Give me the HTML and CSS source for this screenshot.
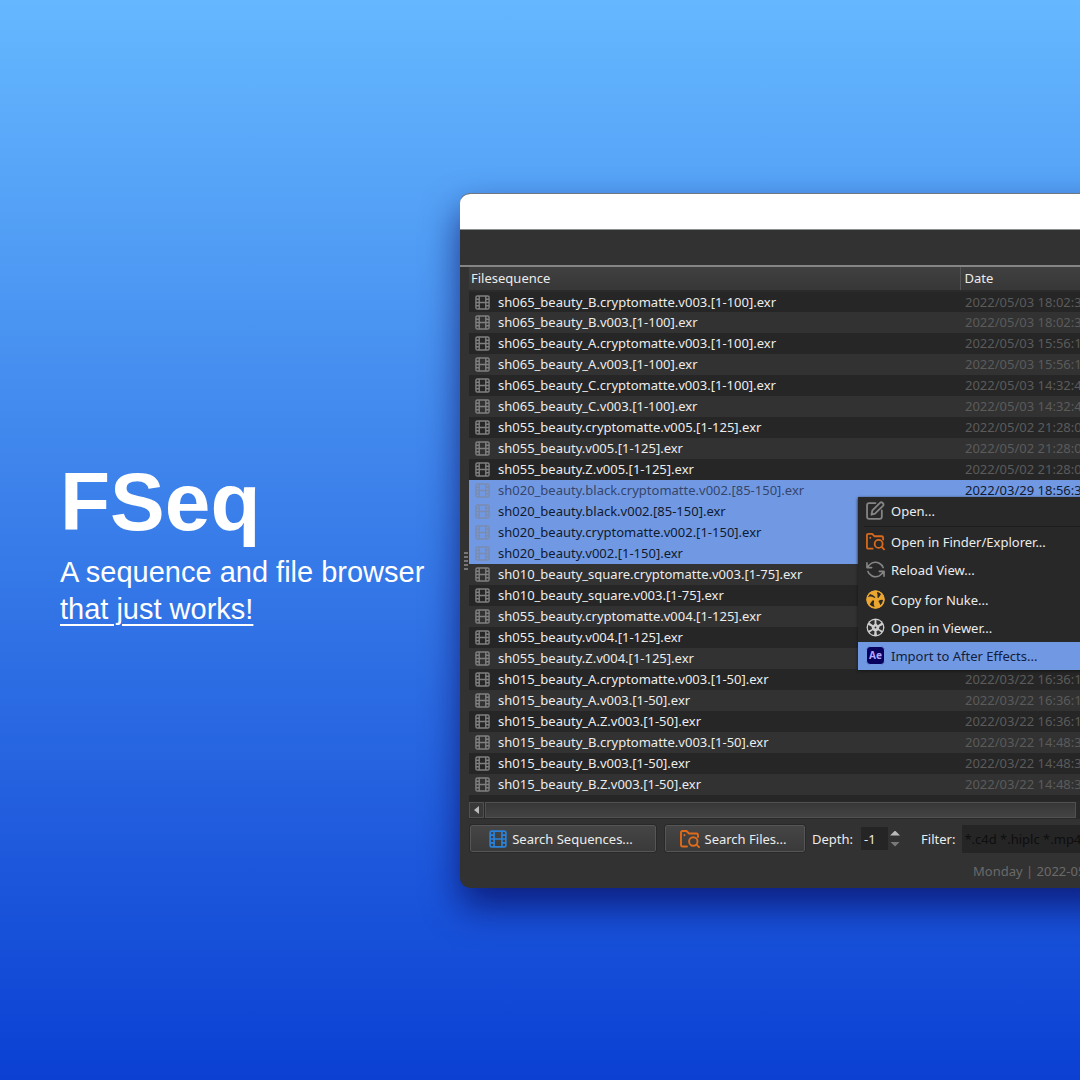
FILE: index.html
```html
<!DOCTYPE html>
<html lang="en">
<head>
<meta charset="utf-8">
<meta name="viewport" content="width=device-width, initial-scale=1">
<title>FSeq</title>
<link rel="stylesheet" href="styles.css">
</head>
<body>
<svg class="sprite" aria-hidden="true">
  <symbol id="film" viewBox="0 0 16 16"><g fill="none" stroke="currentColor" stroke-width="1.5"><rect x="1" y="1" width="14" height="14" rx="1.5"/><path d="M4.500 1v14M11.500 1v14M4.500 8h7M1 4.500h3.500M1 8h3.500M1 11.500h3.500M11.500 4.500H15M11.500 8H15M11.500 11.500H15"/></g></symbol>
  <symbol id="folder" viewBox="0 0 20 18"><g fill="none" stroke="currentColor" stroke-width="1.9" stroke-linecap="round" stroke-linejoin="round"><path d="M7 16.500H2.500Q1 16.500 1 15V2.500Q1 1 2.500 1h4L9 3.500h7.500Q18 3.500 18 5v2"/><circle cx="13.300" cy="11.500" r="4.200"/><path d="m16.500 14.700 2.500 2.500M4.500 5v.2"/></g></symbol>
  <symbol id="edit" viewBox="0 0 18 18"><g fill="none" stroke="currentColor" stroke-width="1.700" stroke-linecap="round" stroke-linejoin="round"><path d="M9 2H3Q1 2 1 4v11q0 2 2 2h10q2 0 2-2V9"/><path d="m6 9 7.500-7.500q1-.8 2.300.4t.5 2.400L8.500 12l-3.300 1Z"/></g></symbol>
  <symbol id="reload" viewBox="0 0 20 18"><g fill="none" stroke="currentColor" stroke-width="1.700" stroke-linecap="round" stroke-linejoin="round"><path d="M1 2v5h5M1.500 7Q3 4 6 2.300q4-2 8 .2 3 1.700 4 4.500M19 16v-5h-5M18.500 11q-1.500 3-4.500 4.700-4 2-8-.2-3-1.700-4-4.500"/></g></symbol>
  <symbol id="nuke" viewBox="0 0 20 20"><circle cx="10" cy="10" r="9.500" fill="#eba531"/><g fill="#2b2924"><path d="M12 8Q12.500 5 11.500 2q3 .3 4.500 2-1 2-3 4.500Z"/><path d="M9 8.500Q5 6 1.800 7.500 2.500 5.500 4 4.300 7 4.800 10 7.500Z"/><path d="M8.500 11.500Q7.500 14.500 9 18 6 17.500 4 15.300 5 12.500 7.500 10.500Z"/><path d="M13 11.500q2.500-1.500 5-1Q17.500 14 15 16q-.5-2.500-2-4.500Z"/></g><circle cx="10" cy="10" r="9" fill="none" stroke="#eba531" stroke-width="1.400"/></symbol>
  <symbol id="reel" viewBox="0 0 20 20"><circle cx="10" cy="10" r="9.400" fill="#cfcfcf"/><g fill="#303030"><path d="M11 2q3.500.3 5.300 3L12.500 7.700 11 6ZM9 2Q5.500 2.300 3.700 5L7.500 7.700 9 6ZM2.300 7.300Q1.500 10.500 2.600 13.500l3.800-2L5.700 9ZM17.700 7.300Q18.500 10.500 17.400 13.500l-3.800-2L14.300 9ZM7 13l-3.200 2.200Q5.500 17.500 8.500 18L9 14ZM13 13l3.200 2.200q-1.700 2.300-4.700 2.800L11 14Z"/></g><circle cx="10" cy="10" r="1" fill="#303030"/></symbol>
</svg>
<main class="page">
  <section class="hero">
    <h1>FSeq</h1>
    <p>A sequence and file browser<br><u>that just works!</u></p>
  </section>
  <section class="window" aria-label="File browser">
    <div class="titlebar"></div>
    <div class="toolbar"></div>
    <div class="content">
      <div class="list">
        <table>
          <thead><tr><th class="name" scope="col">Filesequence</th><th scope="col">Date</th></tr></thead>
          <tbody id="rows"></tbody>
        </table>
      </div>
      <div class="scrollbar"><button class="scroll-left" type="button" aria-label="Scroll left"></button><div class="thumb"></div></div>
      <form class="controls">
        <button class="search sequences" type="button"><svg><use href="#film"/></svg>Search Sequences...</button>
        <button class="search files" type="button"><svg><use href="#folder"/></svg>Search Files...</button>
        <label for="depth">Depth:</label>
        <input id="depth" type="text" inputmode="numeric" value="-1">
        <span class="stepper"><button type="button" aria-label="Increase depth"></button><button class="down" type="button" aria-label="Decrease depth"></button></span>
        <label for="filter">Filter:</label>
        <input id="filter" type="text" placeholder="*.c4d *.hiplc *.mp4">
      </form>
      <p class="status">Monday | 2022-05-09</p>
      <div class="grip"></div>
    </div>
    <div class="menu" role="menu">
      <button role="menuitem" type="button"><svg class="gray"><use href="#edit"/></svg>Open...</button>
      <hr>
      <button role="menuitem" type="button"><svg class="orange"><use href="#folder"/></svg>Open in Finder/Explorer...</button>
      <button role="menuitem" type="button"><svg class="gray"><use href="#reload"/></svg>Reload View...</button>
      <hr class="blank">
      <button role="menuitem" type="button"><svg><use href="#nuke"/></svg>Copy for Nuke...</button>
      <button role="menuitem" type="button"><svg><use href="#reel"/></svg>Open in Viewer...</button>
      <button class="active" role="menuitem" type="button"><span class="ae">Ae</span>Import to After Effects...</button>
    </div>
  </section>
</main>
<script src="app.js"></script>
</body>
</html>
```
FILE: styles.css
```css
* { box-sizing: border-box; }
body {
  margin: 0;
  overflow: hidden;
  background: linear-gradient(#65b8ff, #0b40d3);
  font-family: "Noto Sans", sans-serif;
  font-size: 13px;
  color: #ececec;
}
.sprite { position: absolute; width: 0; height: 0; }
.page {
  min-height: 100vh;
  display: grid;
  grid-template-columns: minmax(460px, 42%) minmax(0, 1fr);
  align-items: center;
  overflow: hidden;
}
.hero {
  padding: 4px 0 0 60px;
  color: #fff;
  font-family: "Liberation Sans", Arial, sans-serif;
}
.hero h1 { margin: 0 0 6px; font-size: 82px; line-height: 92px; }
.hero p { margin: 0; font-size: 29px; line-height: 37px; white-space: nowrap; }
.hero u { text-decoration-thickness: 2px; text-underline-offset: 5px; }

.window {
  position: relative;
  overflow: hidden;
  margin-right: -40px;
  background: #323232;
  border-top: 1px solid #707782;
  border-radius: 10px 0 0 10px;
  box-shadow: 0 18px 36px rgba(5, 5, 85, .7);
}
.titlebar { height: 36px; background: #fff; border-bottom: 1px solid #8b918d; }
.toolbar { height: 37px; border-bottom: 2px solid #858585; }
.content { position: relative; padding: 0 0 0 9px; }
.list { height: 534px; overflow: hidden; background: #262626; }
table { width: 100%; min-width: 680px; table-layout: fixed; border-collapse: collapse; white-space: nowrap; }
th {
  height: 24px;
  padding: 0 4px;
  font-weight: 400;
  text-align: left;
  background: linear-gradient(#404040, #373737);
  border-bottom: 2px solid #2b2b2b;
}
th.name { width: 491px; padding: 0 2px; border-right: 1px solid #565656; }
td { height: 21px; padding: 0 5px; line-height: 20px; color: #5b5b5b; }
td.file { padding-left: 6px; color: #ececec; }
tbody tr:nth-child(even) { background: #323232; }
td svg { width: 15px; height: 15px; margin-right: 8px; color: #808080; vertical-align: -3px; }
tbody tr.selected { background: #7199e3; }
.selected td, .selected td.file { color: #101a30; }
.selected td svg { color: #7b8cae; }
.selected.current td.file { color: #35456b; }

.scrollbar { display: flex; height: 18px; padding: 1px 44px 1px 0; background: #292929; }
.scroll-left { width: 15px; padding: 0; border: 1px solid #505050; background: #393939; display: grid; place-items: center; }
.scroll-left::before { content: ""; border: 4px solid transparent; border-right: 5px solid #bcbcbc; border-left: 0; }
.thumb { flex: 1; margin-left: 1px; border: 1px solid #505050; background: linear-gradient(#373737, #434343); }

.controls { display: flex; align-items: center; height: 40px; padding-left: 1px; overflow: hidden; white-space: nowrap; }
.controls > * { flex: none; }
button, input { font: inherit; color: inherit; }
.search {
  height: 27px;
  display: flex;
  align-items: center;
  justify-content: center;
  gap: 5px;
  padding: 0 4px 0 0;
  border: 1px solid #565656;
  border-radius: 2px;
  background: linear-gradient(#454545, #3a3a3a);
  outline: 1px solid #292929;
}
.search svg { width: 18px; height: 18px; }
.sequences { width: 186px; margin-right: 9px; }
.sequences svg { color: #2b82d9; }
.files { width: 140px; margin-right: 7px; }
.files svg { width: 20px; color: #e06b18; }
input { border: 0; outline: 0; background: #252525; }
#depth { width: 27px; height: 23px; margin-left: 8px; padding: 0 3px; }
.stepper { display: grid; gap: 6px; margin: 0 21px 0 2px; }
.stepper button { width: 10px; height: 5px; padding: 0; border: 0; background: #b9b9b9; clip-path: polygon(50% 0, 100% 100%, 0 100%); }
.stepper .down { background: #797979; clip-path: polygon(0 0, 100% 0, 50% 100%); }
#filter { flex: 1 0 200px; height: 28px; margin-left: 7px; padding: 0 2px; }
#filter::placeholder { color: #0e0e0e; opacity: 1; }
.status { margin: 0; height: 29px; padding-left: 504px; line-height: 24px; white-space: nowrap; color: #6a6a6a; }
.grip { position: absolute; left: 4px; top: 285px; width: 4px; height: 20px; background: repeating-linear-gradient(#777 0 2px, #323232 2px 4px); }

.menu {
  position: absolute;
  left: 398px;
  top: 303px;
  width: 260px;
  background: #282828;
  box-shadow: 0 1px 3px #151515;
}
.menu button {
  display: flex;
  align-items: center;
  gap: 6px;
  width: 100%;
  height: 28px;
  padding: 0 8px;
  border: 0;
  background: none;
  white-space: nowrap;
}
.menu svg, .ae { width: 19px; height: 19px; flex: none; }
.menu svg.gray { color: #858585; }
.menu svg.orange { color: #d86a1d; }
.menu .active { background: #7199e3; color: #13203c; }
.ae { border: 1px solid #7199e3; border-radius: 4px; background: #07005c; color: #b3a6ff; font-size: 10px; font-weight: 700; line-height: 16px; text-align: center; }
.menu hr { height: 1px; margin: 1px 6px; border: 0; background: #1d1d1d; }
.menu hr.blank { margin: 0 6px 1px; background: none; }
```
FILE: app.js
```js
const files = [
  ["sh065_beauty_B.cryptomatte.v003.[1-100].exr", "2022/05/03 18:02:34"],
  ["sh065_beauty_B.v003.[1-100].exr", "2022/05/03 18:02:34"],
  ["sh065_beauty_A.cryptomatte.v003.[1-100].exr", "2022/05/03 15:56:12"],
  ["sh065_beauty_A.v003.[1-100].exr", "2022/05/03 15:56:12"],
  ["sh065_beauty_C.cryptomatte.v003.[1-100].exr", "2022/05/03 14:32:40"],
  ["sh065_beauty_C.v003.[1-100].exr", "2022/05/03 14:32:40"],
  ["sh055_beauty.cryptomatte.v005.[1-125].exr", "2022/05/02 21:28:06"],
  ["sh055_beauty.v005.[1-125].exr", "2022/05/02 21:28:06"],
  ["sh055_beauty.Z.v005.[1-125].exr", "2022/05/02 21:28:06"],
  ["sh020_beauty.black.cryptomatte.v002.[85-150].exr", "2022/03/29 18:56:30"],
  ["sh020_beauty.black.v002.[85-150].exr", ""],
  ["sh020_beauty.cryptomatte.v002.[1-150].exr", ""],
  ["sh020_beauty.v002.[1-150].exr", ""],
  ["sh010_beauty_square.cryptomatte.v003.[1-75].exr", ""],
  ["sh010_beauty_square.v003.[1-75].exr", ""],
  ["sh055_beauty.cryptomatte.v004.[1-125].exr", ""],
  ["sh055_beauty.v004.[1-125].exr", ""],
  ["sh055_beauty.Z.v004.[1-125].exr", ""],
  ["sh015_beauty_A.cryptomatte.v003.[1-50].exr", "2022/03/22 16:36:12"],
  ["sh015_beauty_A.v003.[1-50].exr", "2022/03/22 16:36:12"],
  ["sh015_beauty_A.Z.v003.[1-50].exr", "2022/03/22 16:36:12"],
  ["sh015_beauty_B.cryptomatte.v003.[1-50].exr", "2022/03/22 14:48:30"],
  ["sh015_beauty_B.v003.[1-50].exr", "2022/03/22 14:48:30"],
  ["sh015_beauty_B.Z.v003.[1-50].exr", "2022/03/22 14:48:30"]
];
const rows = document.getElementById("rows");
files.forEach(([name, date], i) => {
  const row = rows.insertRow();
  if (i >= 9 && i <= 12) row.classList.add("selected");
  if (i === 9) row.classList.add("current");
  const cell = row.insertCell();
  cell.className = "file";
  cell.innerHTML = '<svg aria-hidden="true"><use href="#film"/></svg>';
  cell.append(name);
  row.insertCell().textContent = date;
});
```
